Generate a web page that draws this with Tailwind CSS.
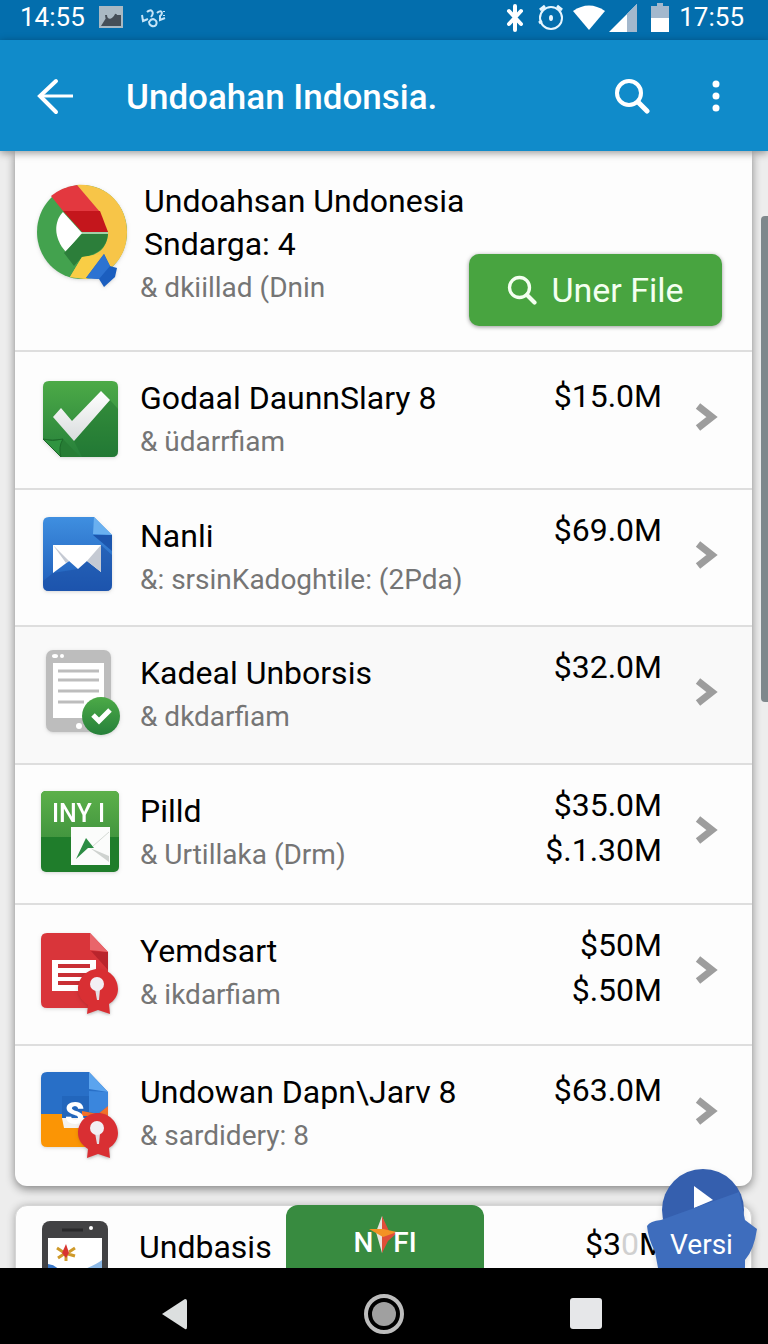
<!DOCTYPE html>
<html lang="id">
<head>
	<meta charset="UTF-8" />
	<title>Undoahan Indonsia</title>
	<meta name="viewport" content="width=device-width, initial-scale=1.0">
	<script src="https://cdn.jsdelivr.net/npm/@tailwindcss/browser@4"></script>
</head>
<body class="h-screen flex flex-col overflow-hidden bg-[#ededed] text-black font-['Roboto',sans-serif]">

	<!-- shared shapes -->
	<svg class="absolute w-0 h-0">
		<defs>
			<linearGradient id="green" x1="0" y1="0" x2="0" y2="1"><stop offset="0" stop-color="#4caa47" /><stop offset="1" stop-color="#26803a" /></linearGradient>
			<linearGradient id="blue" x1="0" y1="0" x2="0" y2="1"><stop offset="0" stop-color="#3f8fe0" /><stop offset="1" stop-color="#1f5cb8" /></linearGradient>
			<linearGradient id="inyi" x1="0" y1="0" x2="0" y2="1"><stop offset="0" stop-color="#5cb04a" /><stop offset="1" stop-color="#43963f" /></linearGradient>
			<linearGradient id="paper" x1="0" y1="0" x2="0" y2="1"><stop offset="0" stop-color="#ffffff" /><stop offset="1" stop-color="#d9dcdd" /></linearGradient>
			<symbol id="chevron" viewBox="0 0 24 30">
				<path d="M3 4 17 15 3 26" fill="none" stroke="#9d9d9d" stroke-width="7" />
			</symbol>
			<symbol id="search" viewBox="0 0 36 36">
				<circle cx="15" cy="15" r="12" fill="none" stroke="currentColor" stroke-width="4" />
				<path d="M24 24 33 33" stroke="currentColor" stroke-width="5" stroke-linecap="round" />
			</symbol>
			<symbol id="badge" viewBox="0 0 40 46">
				<path d="M20 0C31 0 40 9 40 20 40 27 36 32 31 35L32 45 20 41 9 45 10 36C4 32 0 27 0 20 0 9 9 0 20 0Z" fill="#d92f33" />
				<path d="M17 20h5l-1 11-2 0Z" fill="#e3dde3" />
				<circle cx="19" cy="15" r="7" fill="#f2eff4" />
			</symbol>
		</defs>
	</svg>

	<div class="h-10 shrink-0 flex items-center justify-between pl-5 pr-6 bg-[#036ead] text-white text-[26px] leading-8 pb-1.5">
		<div class="flex items-center">
			<span class="w-[79px]">14:55</span>
			<svg class="w-6 h-6" viewBox="0 0 24 24"><path d="M0 1h24v22H0Z" fill="#a9b9c3" /><path d="M2 21 7 13l4 2 5-5h6v11Z" fill="#454f58" /><path d="M7 10c0 7 8 6 10-1" fill="none" stroke="#454f58" stroke-width="2" /></svg>
			<svg class="w-7 h-6 ml-4" viewBox="0 0 28 24" fill="none" stroke="#c5e4f7" stroke-width="2"><path d="M3 10l1 6 5-2M8 7c4-4 8 0 4 5M10 17c4-6 9-1 7 3-3 3-7 0-7-3Zm8-9c4-4 7 0 3 3l0 4 5-2M25 6v1m0 3v1" /></svg>
		</div>
		<div class="flex items-center">
			<svg class="w-5 h-8" viewBox="0 0 20 32"><path d="M10 5v24M4 10l12 13M16 10 4 23" stroke="#fff" stroke-width="4" stroke-linecap="round" /></svg>
			<svg class="w-7 h-8 ml-3" viewBox="0 0 28 32" fill="none" stroke="#e7f6ff" stroke-width="2"><circle cx="14" cy="17" r="11" /><path d="M3 9l5-4M20 5l5 4M2 22l3-2" stroke-width="3" /><ellipse cx="14" cy="17" rx="1" ry="2" /></svg>
			<svg class="w-8 h-8 ml-2" viewBox="0 0 32 32"><path d="M0 10Q16-1 32 10L16 29Z" fill="#fff" /></svg>
			<svg class="w-7 h-8 ml-1" viewBox="0 0 28 32"><path d="M0 31 28 3v28Z" fill="#fff" /><path d="M18 13 28 3v28H18Z" fill="#a3b8cd" /></svg>
			<svg class="w-[18px] h-8 ml-3.5" viewBox="0 0 18 32"><path d="M0 17V5h6V2h6v3h6v12Z" fill="#a3b8cd" /><path d="M0 17h18v14H0Z" fill="#fff" /></svg>
			<span class="ml-2.5">17:55</span>
		</div>
	</div>

	<header class="relative z-10 h-[111px] shrink-0 flex items-center pl-9 pr-10 bg-[#108bca] text-white shadow-[0_2px_8px_rgba(0,0,0,0.4)]">
		<button aria-label="Kembali" class="w-[90px]">
			<svg class="w-10 h-10" viewBox="0 0 40 40" fill="none" stroke="currentColor"><path d="M20 5 4 20 20 36" stroke-width="4" stroke-linecap="round" /><path d="M5 20h32" stroke-width="3" /></svg>
		</button>
		<h1 class="flex-1 pt-1 text-[35px] leading-10 font-medium">Undoahan Indonsia.</h1>
		<button aria-label="Cari" class="mr-[54px]"><svg class="w-9 h-9"><use href="#search" /></svg></button>
		<button aria-label="Menu">
			<svg class="w-10 h-10 -mx-2" viewBox="0 0 40 40" fill="currentColor"><circle cx="20" cy="8" r="3.5" /><circle cx="20" cy="20" r="3.5" /><circle cx="20" cy="32" r="3.5" /></svg>
		</button>
	</header>

	<main class="relative flex-1 min-h-0 overflow-hidden pl-[15px] pr-4">
		<section class="bg-[#fdfdfd] rounded-b-xl shadow-[0_3px_10px_rgba(0,0,0,0.45)]">
			<div class="min-h-[199px] flex items-start pl-[21px] pr-[30px]">
				<svg class="w-[92px] h-[106px] mt-[31px] shrink-0 drop-shadow" viewBox="0 0 92 106">
					<ellipse cx="46" cy="50" rx="45" ry="47" fill="#43a24e" />
					<path d="M41 3C70 1 91 23 91 50 91 70 81 84 66 92L50 97 34 95 46 75C64 74 72 64 72 50Z" fill="#f7c548" />
					<path d="M27 30C18 39 17 56 30 70L46 51Z" fill="#fff" />
					<path d="M15 14Q26 5 41 3L64 30 27 29Z" fill="#e3383f" />
					<path d="M27 29H64L72 50H46Z" fill="#c4161c" />
					<path d="M46 52H72Q70 72 46 75L38 84 28 71Z" fill="#2c7e3a" />
					<path d="M46 75 66 72 50 97 34 95Z" fill="#f9cd45" />
					<path d="M44 51H72" stroke="#fff" />
					<path d="M68 72 74 84 81 86 79 95 68 105 63 97 50 96Z" fill="#1b5ebf" />
					<path d="M68 72 74 84 63 97 50 96Z" fill="#2d73d2" />
				</svg>
				<div class="flex-1 pt-[29px] pl-3 whitespace-nowrap">
					<h2 class="pl-1 text-[32px] leading-[43px]">Undoahsan Undonesia<br>Sndarga: 4</h2>
					<p class="text-[28px] leading-[43px] text-[#757575]">&amp; dkiillad (Dnin</p>
				</div>
				<button class="mt-[103px] w-[253px] h-[72px] shrink-0 flex items-center justify-center gap-3.5 rounded-[10px] bg-[#48a440] text-[#f4fff0] text-[34px] shadow-[0_1px_4px_rgba(0,0,0,0.4)]">
					<svg class="w-[30px] h-[30px]"><use href="#search" /></svg>
					Uner File
				</button>
			</div>

			<ul>
				<li class="min-h-[138px] flex items-start pl-[25px] pr-[33px] border-t-2 border-[#dedede]">
					<svg class="w-20 h-[88px] mt-[23px] shrink-0 drop-shadow" viewBox="0 0 80 88">
						<path d="M9 6h63q6 0 6 6v64q0 6-6 6H21L3 64V12q0-6 6-6Z" fill="url(#green)" />
						<path d="M70 25 78 34V76q0 6-6 6H42L34 66Z" fill="#1c6d2e" opacity=".4" />
						<path d="M3 64 23 64 40 82H21Z" fill="#277d35" />
						<path d="M3 64Q12 67 23 64 18 72 21 82Z" fill="#2f9440" stroke="#1c6929" />
						<path d="M13 42 21 33 32 46 61 16 70 25 34 66Z" fill="url(#paper)" />
					</svg>
					<div class="flex-1 pl-5 pt-[25px]">
						<h3 class="text-[32px] leading-[43px]">Godaal DaunnSlary 8</h3>
						<p class="text-[28px] leading-[43px] text-[#757575]">&amp; üdarrfiam</p>
					</div>
					<p class="pt-[22px] text-[32px] leading-[45px]">$15.0M</p>
					<svg class="w-6 h-[30px] mt-[50px] ml-[33px]"><use href="#chevron" /></svg>
				</li>
				<li class="min-h-[137px] flex items-start pl-[25px] pr-[33px] border-t-2 border-[#dedede]">
					<svg class="w-20 h-[88px] mt-[23px] shrink-0 drop-shadow" viewBox="0 0 80 88">
						<path d="M9 4H54L72 22V72q0 6-6 6H9q-6 0-6-6V10q0-6 6-6Z" fill="url(#blue)" />
						<path d="M13 60 3 68V72q0 6 6 6H66q6 0 6-6V42L61 32 38 56Z" fill="#1a4ba2" opacity=".5" />
						<path d="M53 22H72V38Z" fill="#1c56ae" />
						<path d="M54 4 72 22 53 21Z" fill="#69b0f0" />
						<path d="M13 32H61V59L47 48 38 56 29 48 13 60Z" fill="#fff" />
						<path d="M13 32 29 48 26 50ZM61 32 47 48 61 59Z" fill="#c5cad3" />
					</svg>
					<div class="flex-1 pl-5 pt-[25px]">
						<h3 class="text-[32px] leading-[43px]">Nanli</h3>
						<p class="text-[28px] leading-[43px] text-[#757575]">&amp;: srsinKadoghtile: (2Pda)</p>
					</div>
					<p class="pt-[18px] text-[32px] leading-[45px]">$69.0M</p>
					<svg class="w-6 h-[30px] mt-[50px] ml-[33px]"><use href="#chevron" /></svg>
				</li>
				<li class="min-h-[138px] flex items-start pl-[25px] pr-[33px] border-t-2 border-[#dedede] bg-[#f9f9f9]">
					<svg class="w-20 h-[88px] mt-[23px] shrink-0 overflow-visible drop-shadow" viewBox="0 0 80 88">
						<rect x="6" y="0" width="65" height="82" rx="7" fill="#bdbdbd" />
						<path d="M13 13H64V68H13Z" fill="#fff" />
						<path d="M18 21H59M18 30H59M18 41H59M18 52H44" stroke="#bdbdbd" stroke-width="3" />
						<ellipse cx="15" cy="6" rx="3" ry="2" fill="#fff" /><circle cx="22" cy="6" r="2" fill="#fff" />
						<circle cx="39" cy="76" r="3" fill="#fff" />
						<circle cx="61" cy="66" r="19" fill="url(#green)" />
						<path d="M53 65 59 71 70 60" fill="none" stroke="#fff" stroke-width="5" />
					</svg>
					<div class="flex-1 pl-5 pt-[25px]">
						<h3 class="text-[32px] leading-[43px]">Kadeal Unborsis</h3>
						<p class="text-[28px] leading-[43px] text-[#757575]">&amp; dkdarfiam</p>
					</div>
					<p class="pt-[18px] text-[32px] leading-[45px]">$32.0M</p>
					<svg class="w-6 h-[30px] mt-[50px] ml-[33px]"><use href="#chevron" /></svg>
				</li>
				<li class="min-h-[140px] flex items-start pl-[25px] pr-[33px] border-t-2 border-[#dedede]">
					<svg class="w-20 h-[88px] mt-[23px] shrink-0 drop-shadow" viewBox="0 0 80 88">
						<rect x="1" y="3" width="78" height="81" rx="5" fill="#1f7d2b" />
						<path d="M1 49V8q0-5 5-5H74q5 0 5 5V49Z" fill="url(#inyi)" />
						<text x="12" y="34" font-size="25" font-weight="500" fill="#fff">INY I</text>
						<path d="M31 39H70V77H31Z" fill="#fbfcfb" />
						<path d="M69 44 53 58" stroke="#d5dad5" />
						<path d="M50 60 69 68V74Z" fill="#cfd3d0" />
						<path d="M36 71 46 50 54 60 48 60Z" fill="#2c8c44" />
					</svg>
					<div class="flex-1 pl-5 pt-[25px]">
						<h3 class="text-[32px] leading-[43px]">Pilld</h3>
						<p class="text-[28px] leading-[43px] text-[#757575]">&amp; Urtillaka (Drm)</p>
					</div>
					<p class="pt-[18px] text-[32px] leading-[45px] text-right">$35.0M<br>$.1.30M</p>
					<svg class="w-6 h-[30px] mt-[50px] ml-[33px]"><use href="#chevron" /></svg>
				</li>
				<li class="min-h-[141px] flex items-start pl-[25px] pr-[33px] border-t-2 border-[#dedede]">
					<svg class="w-20 h-[88px] mt-[23px] shrink-0 drop-shadow" viewBox="0 0 80 88">
						<path d="M7 5H50L68 24V74q0 6-6 6H7q-6 0-6-6V11q0-6 6-6Z" fill="#d9353a" />
						<path d="M51 23 68 24V42Z" fill="#b9242c" />
						<path d="M50 5 68 24 50 22Z" fill="#e9656a" />
						<path d="M12 32H56V63H12Z" fill="#fff" />
						<path d="M18 38H50M18 47H50M18 55H50" stroke="#c92f35" stroke-width="4" />
						<use href="#badge" x="38" y="41" width="40" height="46" class="drop-shadow" />
					</svg>
					<div class="flex-1 pl-5 pt-[25px]">
						<h3 class="text-[32px] leading-[43px]">Yemdsart</h3>
						<p class="text-[28px] leading-[43px] text-[#757575]">&amp; ikdarfiam</p>
					</div>
					<p class="pt-[18px] text-[32px] leading-[45px] text-right">$50M<br>$.50M</p>
					<svg class="w-6 h-[30px] mt-[50px] ml-[33px]"><use href="#chevron" /></svg>
				</li>
				<li class="min-h-[142px] flex items-start pl-[25px] pr-[33px] border-t-2 border-[#dedede]">
					<svg class="w-20 h-[92px] mt-[22px] shrink-0 drop-shadow" viewBox="0 0 80 92">
						<path d="M7 4H49L68 24V46H1V10q0-6 6-6Z" fill="#286fc7" />
						<path d="M1 46H68V73q0 6-6 6H7q-6 0-6-6Z" fill="#fb9505" />
						<path d="M22 28H66V38L50 50H22Z" fill="#2266bc" />
						<path d="M49 23 68 24V38L58 46 49 44Z" fill="#3a86dd" />
						<path d="M49 4 68 24 49 21Z" fill="#5ba4ee" />
						<path d="M42 43 58 46 68 38V48H42Z" fill="#f2712a" />
						<path d="M22 50H48V60H24Z" fill="#f4f2ef" />
						<text x="25" y="56" font-size="31" font-weight="900" fill="#fff">S</text>
						<use href="#badge" x="38" y="45" width="40" height="46" class="drop-shadow" />
					</svg>
					<div class="flex-1 pl-5 pt-[25px]">
						<h3 class="text-[32px] leading-[43px]">Undowan Dapn\Jarv 8</h3>
						<p class="text-[28px] leading-[43px] text-[#757575]">&amp; sardidery: 8</p>
					</div>
					<p class="pt-[22px] text-[32px] leading-[45px]">$63.0M</p>
					<svg class="w-6 h-[30px] mt-[50px] ml-[33px]"><use href="#chevron" /></svg>
				</li>
			</ul>
		</section>

		<section class="mt-[19px] min-h-[140px] flex items-start pl-[25px] pr-[84px] bg-[#fdfdfd] rounded-t-xl border border-[#d5d5d5] shadow-[0_1px_8px_rgba(0,0,0,0.3)]">
			<svg class="w-20 h-[88px] mt-[11px] shrink-0" viewBox="0 0 80 88">
				<rect x="1" y="4" width="66" height="110" rx="8" fill="#424244" />
				<path d="M7 21H61V88H7Z" fill="#fff" />
				<path d="M21 13H42" stroke="#29292b" stroke-width="3" /><circle cx="50" cy="11" r="2" fill="#fff" />
				<path d="M7 47Q16 48 20 56H7Z" fill="#3a78c9" /><path d="M32 56Q52 50 61 43V56Z" fill="#8db9e6" />
				<path d="M16 31l6 4M17 41l6-4M34 31l-6 4M34 39l-7-2M25 38v6" stroke="#cf9a2a" stroke-width="3" />
				<path d="M25 27l3 9-3 5-4-5Z" fill="#d8342f" />
			</svg>
			<h3 class="flex-1 pl-[18px] pt-5 text-[32px] leading-[43px]">Undbasis</h3>
			<p class="pt-4 text-[32px] leading-[45px]">$3<span class="text-[#d0d0d0]">0</span>M</p>
		</section>

		<!-- floating controls -->
		<button class="absolute bottom-0 left-[286px] w-[198px] h-[63px] flex items-center justify-center pt-3 rounded-t-xl bg-[#388b40] text-white text-[28px] font-medium">
			N
			<svg class="w-7 h-10 -mx-1 -mt-4" viewBox="0 0 28 40"><path d="M13 1 18 16 13 38 7 17Z" fill="#e8e3dd" /><path d="M13 1 20 16 28 18 19 26 13 38Z" fill="#de4e38" /><path d="M0 14 14 14 28 17 14 22Z" fill="#f39224" /></svg>
			FI
		</button>
		<button class="absolute bottom-0 right-[11px] w-[111px] h-[100px] pt-[54px] text-white text-[28px] leading-[44px]">
			<svg class="absolute inset-0 w-full h-full drop-shadow-md" viewBox="0 0 111 100">
				<circle cx="57" cy="42" r="41" fill="#355fae" />
				<path d="M48 18 67 32 48 40Z" fill="#fff" />
				<path d="M1 58Q4 53 15 52L93 24 99 52 111 61Q108 82 99 92V100H12L9 84Q2 70 1 58Z" fill="#3e6dbd" />
			</svg>
			<span class="relative">Versi</span>
		</button>
		<div class="absolute top-[65px] right-0 w-[7px] h-[486px] rounded-l bg-[#7f888c]"></div>
	</main>

	<nav class="relative h-[76px] shrink-0 flex items-center justify-center gap-[166px] pr-4 pt-4 bg-black">
		<button aria-label="Kembali" class="w-12 flex justify-center"><svg class="w-8 h-9" viewBox="0 0 32 36"><path d="M4 18 27 3q2 0 2 2V31q0 3-2 2Z" fill="#dcdfdf" /></svg></button>
		<button aria-label="Beranda" class="w-10"><svg class="w-10 h-10" viewBox="0 0 40 40"><circle cx="20" cy="20" r="18" fill="none" stroke="#bdbdbd" stroke-width="4" /><circle cx="20" cy="20" r="12" fill="#a0a0a0" /></svg></button>
		<button aria-label="Terbaru" class="w-8"><svg class="w-8 h-8" viewBox="0 0 32 32"><rect width="32" height="31" rx="3" fill="#e6e7e9" /></svg></button>
	</nav>
</body>
</html>
